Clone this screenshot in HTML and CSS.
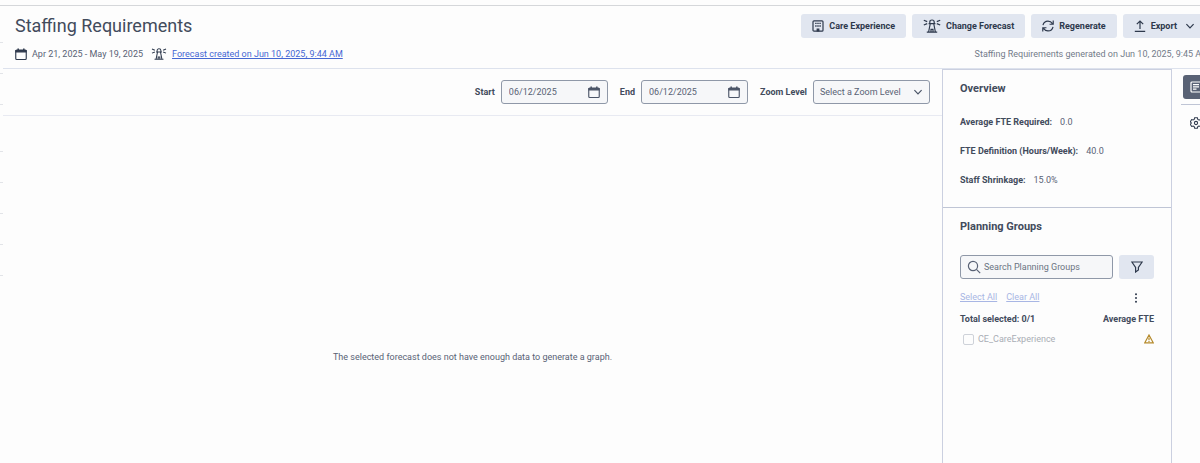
FILE: index.html
```html
<!DOCTYPE html>
<html lang="en">
<head>
<meta charset="utf-8">
<title>Staffing Requirements</title>
<link rel="stylesheet" href="styles.css">
</head>
<body>
<svg class="sprite" aria-hidden="true">
  <symbol id="calendar" viewBox="0.6 0.4 12.8 12.8"><path d="M4 0.8v3M10 0.8v3" stroke-width="1.6"/><rect x="1.4" y="2.6" width="11.2" height="10" rx="1"/><path d="M1.6 3h10.8v1.6H1.6z" fill="currentColor"/></symbol>
  <symbol id="lighthouse" viewBox="0 0 18 14"><path d="M6.8 4.4V3C6.8 1.700 7.700 1 9 1s2.200.7 2.200 2v1.400M5.600 4.600h6.800M7.200 5l-1.600 8M10.800 5l1.600 8M3.800 13.200h10.400M8 13v-2.600h2V13M.8 1.200l3.400 1.400M.8 6l3.400-1.400M17.200 1.200l-3.400 1.400M17.200 6l-3.400-1.400"/></symbol>
  <symbol id="building" viewBox="0 0 12 12"><rect x="1" y="0.8" width="10" height="10.4" rx="1"/><path d="M3.200 3.400h1.400M7.400 3.400h1.400M3.200 6h1.400M7.400 6h1.400M5.300 3.400h1.400M5.300 6h1.400" stroke-width="1.400"/><path d="M5.200 11V9h1.600v2z" fill="currentColor"/></symbol>
  <symbol id="refresh" viewBox="0.8 0.8 12.4 12.4"><path d="M1.8 6.2C2.4 3.6 4.5 2 7 2c2 0 3.6 1 4.6 2.6M12.4 1.4v3.8H8.6M12.2 7.8C11.6 10.4 9.5 12 7 12c-2 0-3.6-1-4.6-2.6M1.6 12.6V8.8h3.8"/></symbol>
  <symbol id="upload" viewBox="0 0 12 12"><path d="M6 9V1M2.8 4.2L6 1l3.2 3.2M.8 11.3h10.4"/></symbol>
  <symbol id="chevron" viewBox="0 0 10 10"><path d="M1.4 3.2L5 6.8l3.6-3.6"/></symbol>
  <symbol id="search" viewBox="0 0 14 14"><circle cx="6" cy="6" r="4.6"/><path d="M9.4 9.4l3.8 3.8"/></symbol>
  <symbol id="filter" viewBox="0 0 12 12"><path d="M.9 1h10.2L7.4 6.4V9L4.6 11V6.4z"/></symbol>
  <symbol id="warning" viewBox="0 0 10 10"><path d="M5 1l4.2 7.8H.8zM5 3.8v2.4M5 7v1"/></symbol>
  <symbol id="more" viewBox="0 0 4 10"><g fill="currentColor" stroke="none"><circle cx="2" cy="1.3" r="1"/><circle cx="2" cy="5" r="1"/><circle cx="2" cy="8.7" r="1"/></g></symbol>
  <symbol id="note" viewBox="0 0 12 12"><rect x="1" y="1" width="10" height="10" rx="1"/><path d="M3 3.7h6M3 5.9h6M3 8.1h3.5"/></symbol>
  <symbol id="gear" viewBox="0 0 14 14"><path d="M5.4 1h3.2l.5 1.8 1.2.7 1.8-.5 1.6 2.7L12.4 7l1.3 1.3-1.6 2.7-1.8-.5-1.2.7-.5 1.8H5.4l-.5-1.8-1.2-.7-1.8.5L.3 8.3 1.6 7 .3 5.7 1.9 3l1.8.5 1.2-.7z"/><circle cx="7" cy="7" r="1.9"/></symbol>
</svg>
<div class="page">
  <div class="edge" aria-hidden="true">
    <div class="edge-group"><i></i><i></i><i></i></div>
    <div class="edge-group"><i></i><i></i><i></i><i></i><i></i></div>
  </div>
  <main class="main">
    <header class="header">
      <div class="header-row">
        <h1 class="title">Staffing Requirements</h1>
        <div class="actions">
          <button class="button"><svg class="icon"><use href="#building"/></svg>Care Experience</button>
          <button class="button"><svg class="icon icon-wide"><use href="#lighthouse"/></svg>Change Forecast</button>
          <button class="button"><svg class="icon"><use href="#refresh"/></svg>Regenerate</button>
          <button class="button"><svg class="icon"><use href="#upload"/></svg>Export<svg class="icon icon-xs caret"><use href="#chevron"/></svg></button>
        </div>
      </div>
      <div class="header-row">
        <div class="meta">
          <svg class="icon"><use href="#calendar"/></svg><span class="dates">Apr 21, 2025 - May 19, 2025</span>
          <svg class="icon icon-mid"><use href="#lighthouse"/></svg><a class="link" href="#">Forecast created on Jun 10, 2025, 9:44 AM</a>
        </div>
        <span class="generated">Staffing Requirements generated on Jun 10, 2025, 9:45 AM</span>
      </div>
    </header>
    <div class="content">
      <section class="chart">
        <form class="toolbar">
          <div class="field"><label for="start">Start</label><span class="control date"><input id="start" type="text" value="06/12/2025"><svg class="icon"><use href="#calendar"/></svg></span></div>
          <div class="field"><label for="end">End</label><span class="control date"><input id="end" type="text" value="06/12/2025"><svg class="icon"><use href="#calendar"/></svg></span></div>
          <div class="field"><label for="zoom">Zoom Level</label><span class="control zoom"><select id="zoom"><option>Select a Zoom Level</option></select><svg class="icon icon-xs"><use href="#chevron"/></svg></span></div>
        </form>
        <p class="empty">The selected forecast does not have enough data to generate a graph.</p>
      </section>
      <aside class="panel">
        <section class="overview">
          <h2 class="heading">Overview</h2>
          <dl class="stats">
            <div class="stat"><dt>Average FTE Required:</dt><dd>0.0</dd></div>
            <div class="stat"><dt>FTE Definition (Hours/Week):</dt><dd>40.0</dd></div>
            <div class="stat"><dt>Staff Shrinkage:</dt><dd>15.0%</dd></div>
          </dl>
        </section>
        <section class="groups">
          <h2 class="heading">Planning Groups</h2>
          <div class="search-row">
            <span class="control search"><svg class="icon icon-l"><use href="#search"/></svg><input type="text" aria-label="Search Planning Groups" placeholder="Search Planning Groups"></span>
            <button class="button filter" aria-label="Filter"><svg class="icon"><use href="#filter"/></svg></button>
          </div>
          <div class="select-row">
            <a class="link faded" href="#">Select All</a><a class="link faded" href="#">Clear All</a>
            <button class="more" aria-label="More options"><svg class="icon icon-dots"><use href="#more"/></svg></button>
          </div>
          <div class="totals"><span>Total selected: 0/1</span><span>Average FTE</span></div>
          <div class="group"><input class="check" type="checkbox" id="ce" disabled><label for="ce">CE_CareExperience</label><svg class="icon icon-xs warning"><use href="#warning"/></svg></div>
        </section>
      </aside>
      <nav class="tools">
        <div class="tool-slot"><button class="tool active" aria-label="Overview"><svg class="icon"><use href="#note"/></svg></button></div>
        <button class="tool" aria-label="Settings"><svg class="icon"><use href="#gear"/></svg></button>
      </nav>
    </div>
  </main>
</div>
</body>
</html>
```
FILE: styles.css
```css
* { box-sizing: border-box; }
body {
  margin: 0;
  padding-top: 5px;
  min-height: 100vh;
  display: flex;
  background: #fdfdfd;
  color: #596275;
  font: 9px/12px Roboto, sans-serif;
  overflow: hidden;
}
h1, h2, p, dl, dd { margin: 0; }
input, select, button { font: inherit; color: inherit; margin: 0; }
.sprite { display: none; }
.icon {
  width: 12px;
  height: 12px;
  flex: none;
  color: #2e394c;
  fill: none;
  stroke: currentColor;
  stroke-width: 1.2;
}
.icon-l { width: 14px; height: 14px; }
.icon-xs { width: 10px; height: 10px; }
.icon-wide { width: 18px; height: 14px; }
.icon-mid { width: 16px; }
.icon-dots { width: 4px; height: 10px; }

.page { flex: 1; min-width: 0; display: flex; border-top: 1px solid #d5d7da; }
.edge { width: 3px; padding-top: 6px; display: flex; flex-direction: column; gap: 16px; }
.edge-group i { display: block; height: 31px; border-bottom: 1px solid #e2e4e8; }
/* The workspace runs past the right edge of the window. */
.main { flex: 1; min-width: 0; margin-right: -9px; display: flex; flex-direction: column; }

.header { padding: 8px 0 8px 12px; border-bottom: 1px solid #dde2ed; }
.header-row { display: flex; align-items: center; justify-content: space-between; }
.header-row + .header-row { margin-top: 10px; }
.title { font-size: 18px; line-height: 24px; font-weight: 400; color: #424b5c; }
.actions { display: flex; gap: 6px; padding-right: 3px; }
.button {
  height: 24px;
  padding: 0 11px;
  display: flex;
  align-items: center;
  gap: 5px;
  border: 0;
  border-radius: 3px;
  background: #e1e6f0;
  color: #2e394c;
  font-weight: 700;
}
.caret { margin-left: 3px; }
.meta { display: flex; align-items: center; gap: 5px; }
.dates { margin-right: 3px; }
.link { color: #4567d3; text-decoration: underline; }
.generated { color: #737b89; }

.content { flex: 1; display: flex; }
.chart { flex: 1; display: flex; flex-direction: column; }
.toolbar {
  display: flex;
  justify-content: flex-end;
  gap: 12px;
  padding: 11px 12px;
  border-bottom: 1px solid #e8eaf2;
}
.field { display: flex; align-items: center; gap: 6px; }
.field label { font-weight: 700; color: #424b5c; }
.field .icon { color: #4a5467; }
.control {
  height: 24px;
  padding: 0 6px;
  display: flex;
  align-items: center;
  border: 1px solid #8f98a8;
  border-radius: 3px;
  background: #f6f7f9;
}
.control input, .control select {
  flex: 1;
  min-width: 0;
  padding: 0;
  border: 0;
  outline: 0;
  background: none;
  appearance: none;
}
.control input::placeholder { color: #6b7482; opacity: 1; }
.date { width: 107px; padding: 0 7px; }
.zoom { width: 117px; }
.empty { margin: 235px auto 0; }

.panel { width: 230px; border: 1px solid #cbd0e0; border-bottom: 0; }
.overview { padding: 12px 17px 21px; border-bottom: 1px solid #bfc5d5; }
.heading { font-size: 11px; line-height: 14px; font-weight: 700; color: #424b5c; }
.stats { margin-top: 20px; display: grid; gap: 17px; }
.stat { display: flex; gap: 8px; }
.stat dt { font-weight: 700; color: #424b5c; }
.groups { padding: 12px 17px; }
.search-row { margin-top: 21px; display: flex; gap: 6px; }
.search { flex: 1; gap: 3px; }
.search .icon { color: #596275; }
.filter { width: 35px; justify-content: center; padding: 0; }
.select-row { margin-top: 12px; display: flex; align-items: center; gap: 9px; }
.faded { color: #a8b6e4; }
.more { margin: 2px 16px 0 auto; padding: 0; border: 0; background: none; display: flex; }
.totals {
  margin-top: 10px;
  display: flex;
  justify-content: space-between;
  font-weight: 700;
  color: #424b5c;
}
.group { margin-top: 8px; padding-left: 3px; display: flex; align-items: center; color: #a9adb5; }
.check {
  appearance: none;
  width: 11px;
  height: 11px;
  margin-right: 4px;
  border: 1px solid #ced2d9;
  border-radius: 2px;
}
.warning { margin-left: auto; color: #b58a2b; }

.tools { width: 37px; padding-left: 9px; }
.tool-slot { padding: 6px 0 5px 2px; border-bottom: 1px solid #bfc5d5; }
.tool {
  width: 28px;
  height: 24px;
  padding: 0 0 0 7px;
  display: flex;
  align-items: center;
  border: 0;
  border-radius: 3px;
  background: none;
}
.tool-slot + .tool { margin-top: 6px; padding-left: 9px; }
.active { background: #596275; }
.active .icon { color: #fff; }
```
